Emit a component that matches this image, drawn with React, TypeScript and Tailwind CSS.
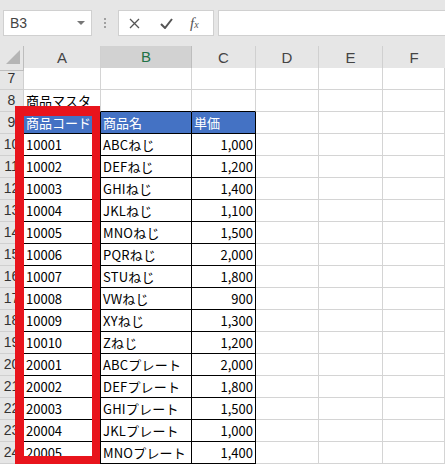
import React from "react";

const cols = "grid grid-cols-[24px_77px_91px_64px_63px_64px_1fr]";
const cellFont = { fontFamily: '"Noto Sans CJK JP", "Noto Sans", sans-serif' };

const items: [string, string, string][] = [
  ["10001", "ABCねじ", "1,000"],
  ["10002", "DEFねじ", "1,200"],
  ["10003", "GHIねじ", "1,400"],
  ["10004", "JKLねじ", "1,100"],
  ["10005", "MNOねじ", "1,500"],
  ["10006", "PQRねじ", "2,000"],
  ["10007", "STUねじ", "1,800"],
  ["10008", "VWねじ", "900"],
  ["10009", "XYねじ", "1,300"],
  ["10010", "Zねじ", "1,200"],
  ["20001", "ABCプレート", "2,000"],
  ["20002", "DEFプレート", "1,800"],
  ["20003", "GHIプレート", "1,500"],
  ["20004", "JKLプレート", "1,000"],
  ["20005", "MNOプレート", "1,400"],
];

const RowHead = ({ n, dark }: { n: number; dark?: boolean }) => (
  <div
    className={`h-[22px] bg-[#e6e6e6] border-b border-[#d0d0d0] border-r ${dark ? "border-r-black" : ""} flex items-center justify-center text-[14px] text-[#333] font-['Liberation_Sans',sans-serif]`}
  >
    {n}
  </div>
);

const Blank = () => <div className="h-[22px] bg-white border-r border-b border-[#d4d4d4]" />;

const App = () => {
  return (
    <div className="relative w-[445px] h-[467px] overflow-hidden bg-white select-none">
      {/* toolbar */}
      <div className="h-[46px] bg-[#e6e6e6] flex items-start pt-[10px]">
        <div className="ml-[3px] w-[89px] h-[26px] bg-white border border-[#d0d0d0] flex items-center justify-between pl-[6px] pr-[6px]">
          <span className="text-[14px] text-[#444] font-['Liberation_Sans',sans-serif]">B3</span>
          <svg width="8" height="5" viewBox="0 0 8 5">
            <path d="M0 0 L8 0 L4 4 Z" fill="#777" />
          </svg>
        </div>
        <div className="ml-[12px] mr-[12px] h-[26px] flex flex-col items-center justify-center gap-[2px]">
          <span className="w-[2px] h-[2px] bg-[#a0a0a0]" />
          <span className="w-[2px] h-[2px] bg-[#a0a0a0]" />
          <span className="w-[2px] h-[2px] bg-[#a0a0a0]" />
        </div>
        <div className="w-[96px] h-[26px] bg-white border border-[#d0d0d0] flex items-center">
          <svg className="ml-[10px]" width="11" height="11" viewBox="0 0 11 11">
            <path d="M1 1 L10 10 M10 1 L1 10" stroke="#555" strokeWidth="1.3" />
          </svg>
          <svg className="ml-[20px]" width="13" height="11" viewBox="0 0 13 11">
            <path d="M1 6 L5 10 L12 1" stroke="#555" strokeWidth="2" fill="none" />
          </svg>
          <span className="ml-[17px] text-[15px] italic text-[#555] font-['Liberation_Serif',serif] leading-none">
            f<span className="text-[10px]">x</span>
          </span>
        </div>
        <div className="ml-[4px] flex-1 h-[26px] bg-white border border-[#d0d0d0] border-r-0" />
      </div>

      {/* column headers */}
      <div className={`${cols} h-[22px] bg-[#e6e6e6] font-['Liberation_Sans',sans-serif] text-[15px] text-[#444]`}>
        <div className="relative border-r border-b border-[#bdbdbd]">
          <svg className="absolute left-[6px] top-[4px]" width="14" height="14" viewBox="0 0 14 14">
            <path d="M14 0 L14 14 L0 14 Z" fill="#b5b5b5" />
          </svg>
        </div>
        <div className="flex items-center justify-center border-r border-b border-[#d0d0d0]">A</div>
        <div className="flex items-center justify-center border-r border-[#bdbdbd] bg-[#d2d2d2] text-[#217346] border-b-2 border-b-[#217346]">B</div>
        <div className="flex items-center justify-center border-r border-b border-[#d0d0d0]">C</div>
        <div className="flex items-center justify-center border-r border-b border-[#d0d0d0]">D</div>
        <div className="flex items-center justify-center border-r border-b border-[#d0d0d0]">E</div>
        <div className="flex items-center justify-center border-b border-[#d0d0d0]">F</div>
      </div>

      {/* row 7 */}
      <div className={cols} style={cellFont}>
        <RowHead n={7} />
        <Blank />
        <Blank />
        <Blank />
        <Blank />
        <Blank />
        <Blank />
      </div>

      {/* row 8 */}
      <div className={`${cols} text-[13px] text-black`} style={cellFont}>
        <RowHead n={8} />
        <div className="h-[22px] border-r border-b border-[#d4d4d4] border-b-black pl-[2px] flex items-end pb-[1px] whitespace-nowrap overflow-visible">
          商品マスタ
        </div>
        <div className="h-[22px] border-r border-b border-[#d4d4d4] border-b-black" />
        <div className="h-[22px] border-r border-b border-[#d4d4d4] border-b-black" />
        <Blank />
        <Blank />
        <Blank />
      </div>

      {/* row 9 header */}
      <div className={`${cols} text-[13px]`} style={cellFont}>
        <RowHead n={9} dark />
        <div className="h-[22px] bg-[#4472c4] text-white border-r border-b border-black pl-[2px] flex items-end pb-[1px]">商品コード</div>
        <div className="h-[22px] bg-[#4472c4] text-white border-r border-b border-black pl-[2px] flex items-end pb-[1px]">商品名</div>
        <div className="h-[22px] bg-[#4472c4] text-white border-r border-b border-black pl-[2px] flex items-end pb-[1px]">単価</div>
        <Blank />
        <Blank />
        <Blank />
      </div>

      {items.map(([code, name, price], i) => (
        <div key={code} className={`${cols} text-[13px] text-black`} style={cellFont}>
          <RowHead n={10 + i} dark />
          <div className="h-[22px] border-r border-b border-black pl-[2px] flex items-end pb-[1px]">{code}</div>
          <div className="h-[22px] border-r border-b border-black pl-[2px] flex items-end pb-[1px] whitespace-nowrap tracking-[0.2px]">{name}</div>
          <div className="h-[22px] border-r border-b border-black pr-[2px] flex items-end justify-end pb-[1px]">{price}</div>
          <Blank />
          <Blank />
          <Blank />
        </div>
      ))}

      {/* highlight frame */}
      <div className="absolute left-[15px] top-[106px] w-[85px] h-[358px] border-[8px] border-l-[9px] border-t-[10px] border-[#e8141c]" />
    </div>
  );
};

export default App;
